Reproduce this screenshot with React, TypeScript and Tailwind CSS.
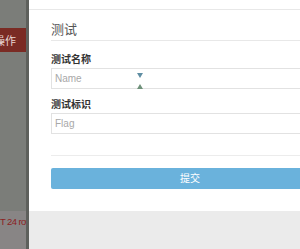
import React from 'react';

const cjk = {fontFamily: '"Liberation Sans", "Noto Sans CJK SC", sans-serif'};

function Field({label, placeholder, spinner}: {label: string; placeholder: string; spinner?: boolean}) {
  return (
    <div className="flex flex-col">
      <label className="text-[10px] leading-[12px] font-bold text-[#333]">{label}</label>
      <div className="relative mt-[2px] flex h-[21px] w-[278px] items-center border border-[#e2e2e2] px-[3px]">
        <span className="text-[10px] text-[#a8a8a8]">{placeholder}</span>
        {spinner && (
          <div className="absolute left-[85px] top-[4px] flex flex-col items-center gap-[6px]">
            <svg width="6" height="5" viewBox="0 0 6 5">
              <path d="M0 0H6L3 5Z" fill="#5f8ea3" />
            </svg>
            <svg width="6" height="5" viewBox="0 0 6 5">
              <path d="M3 0L6 5H0Z" fill="#6f917a" />
            </svg>
          </div>
        )}
      </div>
    </div>
  );
}

export default function App() {
  return (
    <div className="flex h-[249px] w-[300px] overflow-hidden bg-[#ebebeb]" style={cjk}>
      <div className="flex w-[29px] shrink-0 flex-col border-r-[3px] border-[#5e605c] bg-[#7b7d79]">
        <div className="mt-[28px] flex h-[24px] items-center overflow-hidden bg-[#7a2b24] pt-[2px]">
          <span className="-ml-[6px] whitespace-nowrap text-[11px] text-[#e8d6d3]">操作</span>
        </div>
        <div className="flex-1" />
        <div className="flex h-[38px] overflow-hidden bg-[#888585] pt-[4px]">
          <span className="whitespace-nowrap text-[9.5px] tracking-[-0.6px] text-[#8c1f1f]">T 24 row</span>
        </div>
      </div>

      <div className="flex min-w-0 flex-1 flex-col">
        <div className="flex h-[211px] flex-col overflow-hidden bg-white">
          <div className="h-[10px] shrink-0 border-b border-[#e8e8e8]" />
          <div className="flex flex-col pl-[22px]">
            <div className="w-[278px] border-b border-[#e8e8e8] pb-[3px] pt-[13px] text-[13px] leading-[14px] text-[#555]">
              测试
            </div>
            <div className="mt-[13px] flex flex-col gap-[10px]">
              <Field label="测试名称" placeholder="Name" spinner />
              <Field label="测试标识" placeholder="Flag" />
            </div>
            <div className="mt-[21px] w-[278px] border-t border-[#ececec]" />
            <button className="mt-[12px] flex h-[21px] w-[278px] items-center justify-center rounded-[2px] bg-[#6ab2dc] text-[10px] text-white">
              提交
            </button>
          </div>
        </div>
      </div>
    </div>
  );
}
